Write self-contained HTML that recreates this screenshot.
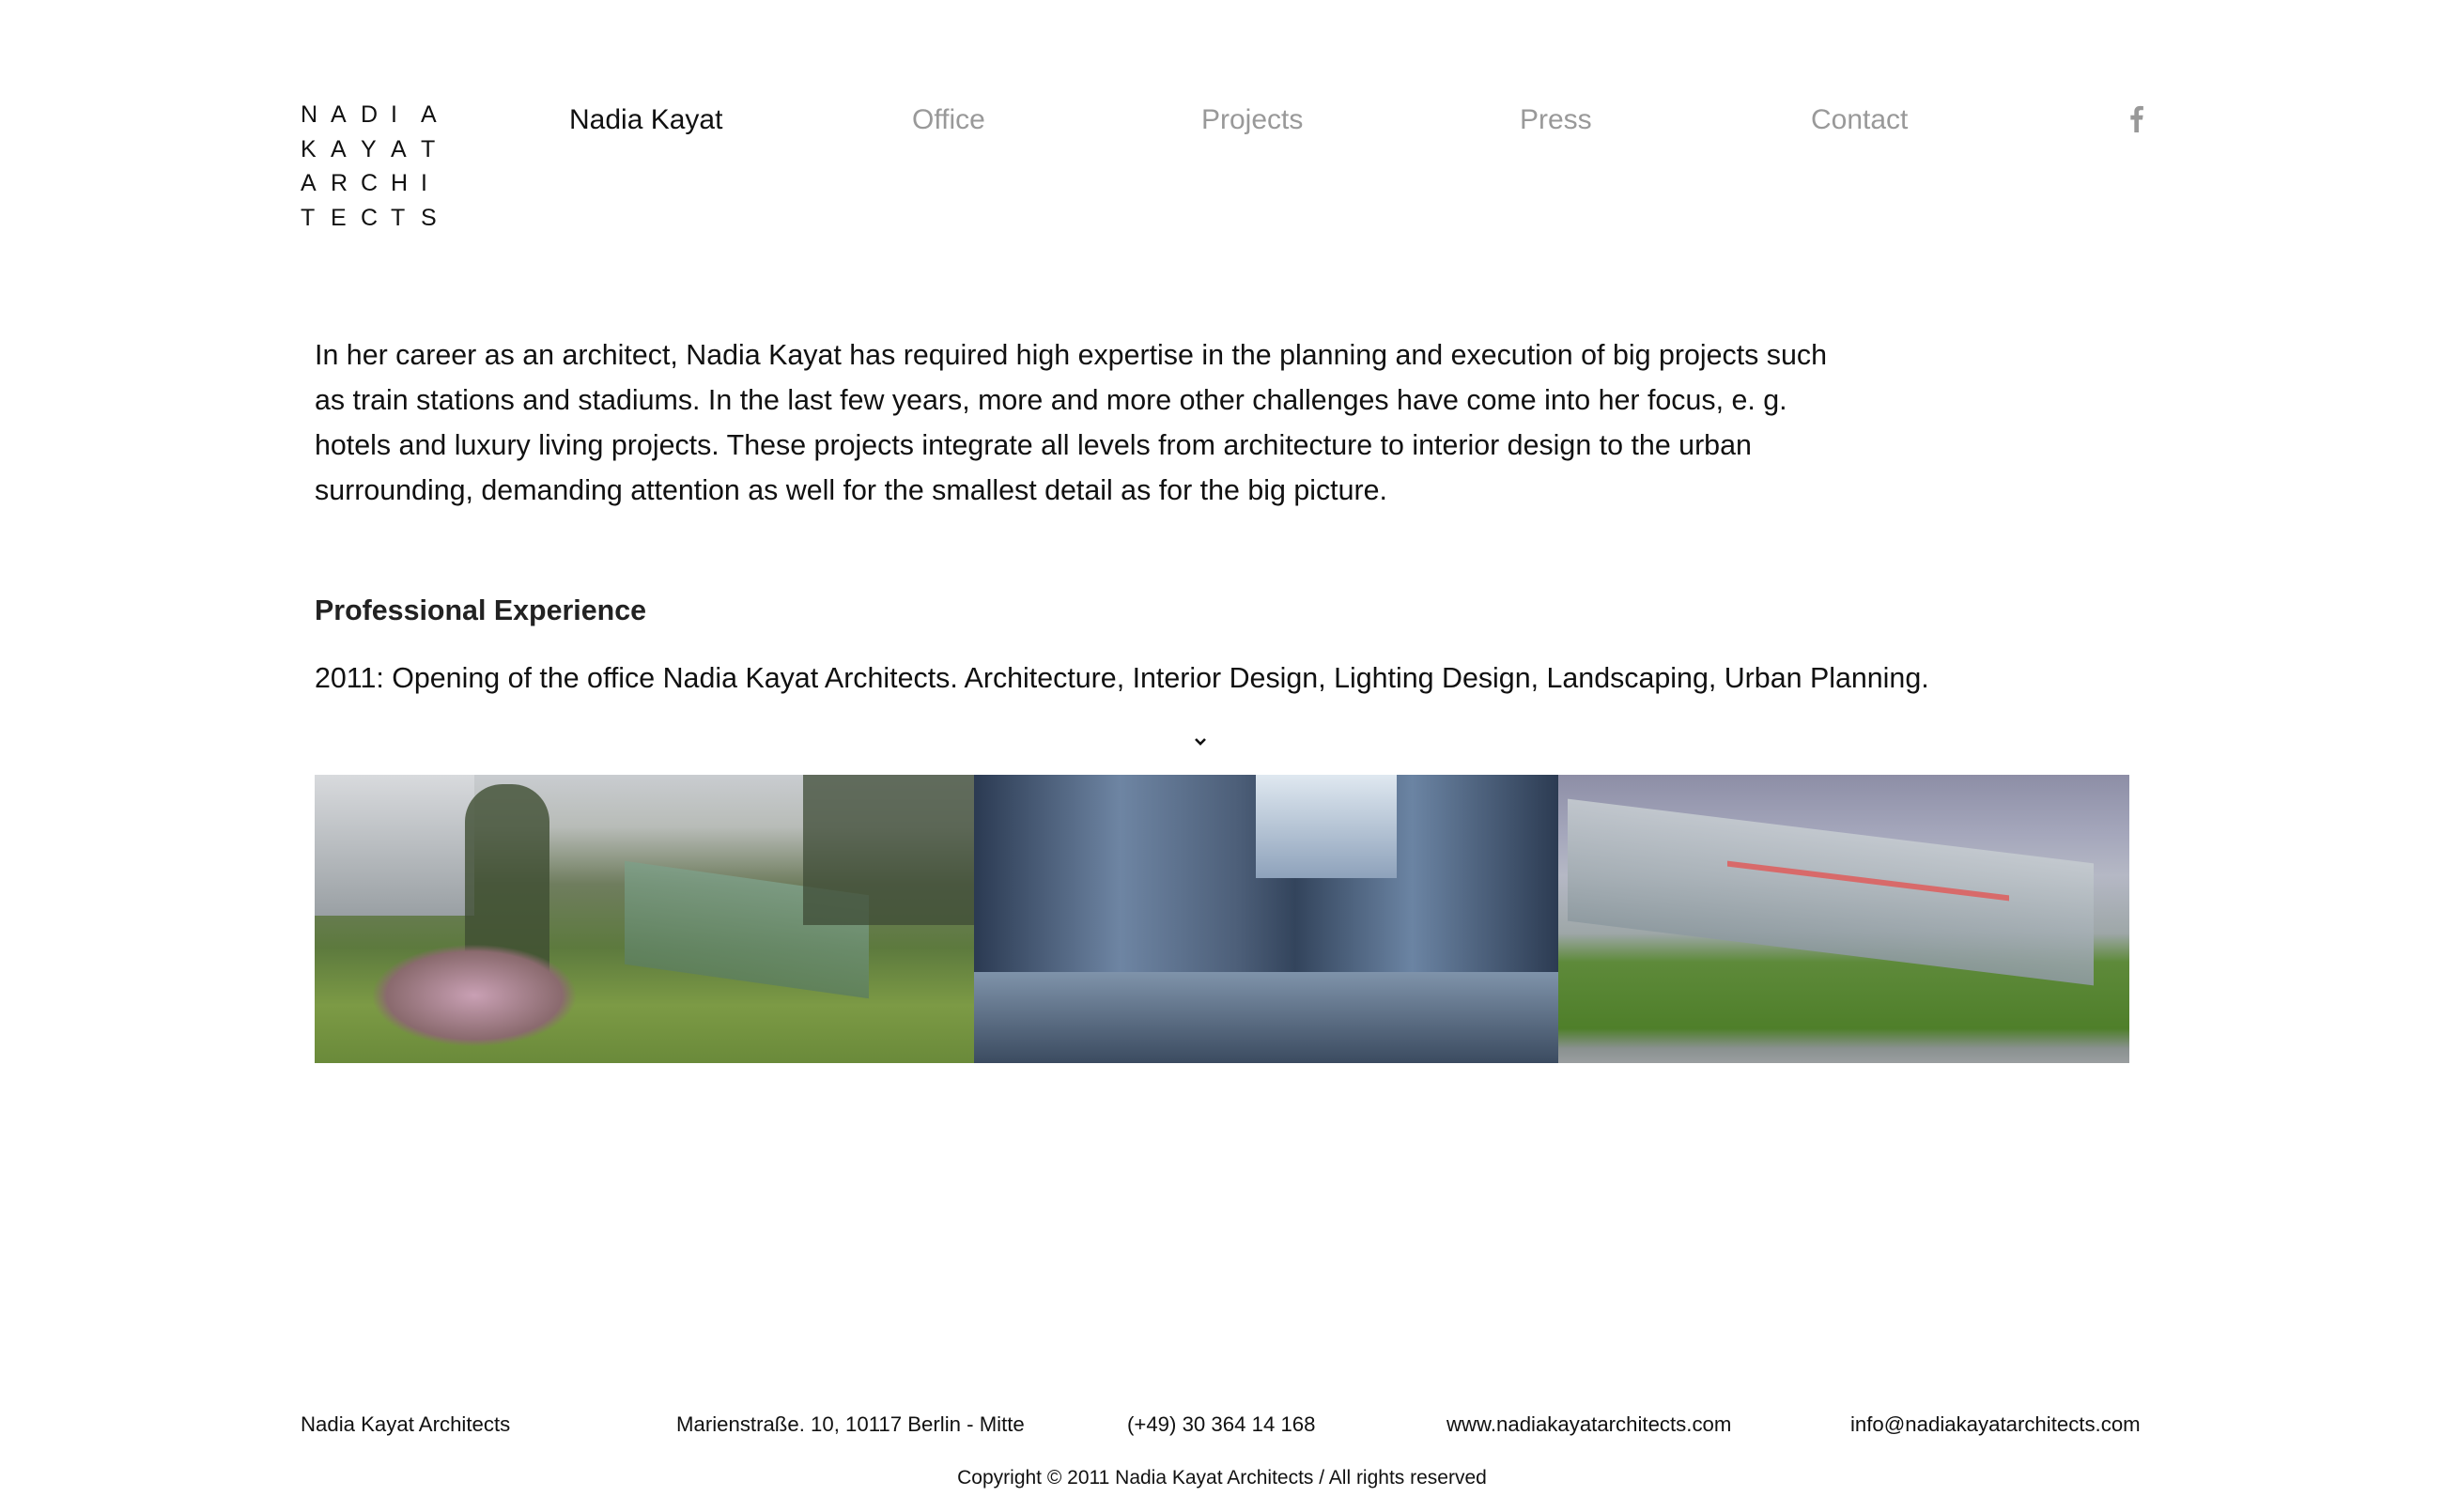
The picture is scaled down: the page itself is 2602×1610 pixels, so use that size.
<!DOCTYPE html>
<html><head><meta charset="utf-8"><style>
html,body{margin:0;padding:0;background:#fff;}
body{width:2602px;height:1610px;position:relative;overflow:hidden;font-family:"Liberation Sans",Arial,sans-serif;color:#111;}
.a{position:absolute;white-space:nowrap;}
.logo{left:320px;top:104px;font-size:25px;line-height:36.5px;}
.logo div{white-space:nowrap;height:36.5px;}
.logo span{width:32px;display:inline-block;text-align:left;}
.nav{top:111px;font-size:30px;color:#999;}
.p{left:335px;font-size:30.4px;line-height:48px;color:#111;}
.f{top:1504px;font-size:22.2px;color:#111;}
</style></head><body>
<div class="a logo">
<div><span>N</span><span>A</span><span>D</span><span>I</span><span>A</span></div>
<div><span>K</span><span>A</span><span>Y</span><span>A</span><span>T</span></div>
<div><span>A</span><span>R</span><span>C</span><span>H</span><span>I</span></div>
<div><span>T</span><span>E</span><span>C</span><span>T</span><span>S</span></div>
</div>
<div class="a nav" style="left:606px;color:#111">Nadia Kayat</div>
<div class="a nav" style="left:971px">Office</div>
<div class="a nav" style="left:1279px">Projects</div>
<div class="a nav" style="left:1618px">Press</div>
<div class="a nav" style="left:1928px">Contact</div>
<svg class="a" style="left:2266px;top:111px" width="17" height="30" viewBox="0 0 16 30"><path d="M10.5 30V16.5h4l.6-4.8h-4.6V8.6c0-1.4.4-2.3 2.4-2.3H15.4V2.1C15 2 13.5 1.9 11.8 1.9 8.2 1.9 5.8 4.1 5.8 8.1v3.6H1.8v4.8h4V30z" fill="#999"/></svg>

<div class="a p" style="top:354px">In her career as an architect, Nadia Kayat has required high expertise in the planning and execution of big projects such<br>as train stations and stadiums. In the last few years, more and more other challenges have come into her focus, e. g.<br>hotels and luxury living projects. These projects integrate all levels from architecture to interior design to the urban<br>surrounding, demanding attention as well for the smallest detail as for the big picture.</div>
<div class="a p" style="top:626px;font-weight:bold;color:#222">Professional Experience</div>
<div class="a p" style="top:698px">2011: Opening of the office Nadia Kayat Architects. Architecture, Interior Design, Lighting Design, Landscaping, Urban Planning.</div>
<svg class="a" style="left:1271px;top:785px" width="14" height="10" viewBox="0 0 14 10"><path d="M2 2l5 5 5-5" stroke="#111" stroke-width="2.6" fill="none"/></svg>

<div class="a" style="left:335px;top:825px;width:702px;height:307px;overflow:hidden;background:linear-gradient(180deg,#c9ccd0 0%,#b8bcb8 18%,#6f7d5e 38%,#5d7a3e 60%,#7c9a45 80%,#6a8a3a 100%)">
 <div style="position:absolute;left:0;top:0;width:170px;height:150px;background:linear-gradient(180deg,#d8dadd,#9aa0a4)"></div>
 <div style="position:absolute;left:160px;top:10px;width:90px;height:200px;background:#3f4d32;border-radius:40px 40px 0 0;opacity:.8"></div>
 <div style="position:absolute;left:330px;top:110px;width:260px;height:110px;background:linear-gradient(180deg,#7e9f88,#5d7f5e);opacity:.85;transform:skewY(8deg)"></div>
 <div style="position:absolute;left:520px;top:0;width:186px;height:160px;background:#3e4b36;opacity:.75"></div>
 <div style="position:absolute;left:60px;top:180px;width:220px;height:110px;background:radial-gradient(#c9a0b4,#8a6a6e 60%,transparent 70%)"></div>
</div>
<div class="a" style="left:1037px;top:825px;width:622px;height:307px;overflow:hidden;background:linear-gradient(90deg,#2b3a52 0%,#6e85a3 25%,#4d5f79 45%,#33445c 55%,#6b84a3 75%,#2c3b52 100%)">
 <div style="position:absolute;left:300px;top:0;width:150px;height:110px;background:linear-gradient(180deg,#dfe8f0,#8ea2bb)"></div>
 <div style="position:absolute;left:0;top:210px;width:622px;height:97px;background:linear-gradient(180deg,#7f93aa,#3b4b60)"></div>
</div>
<div class="a" style="left:1659px;top:825px;width:608px;height:307px;overflow:hidden;background:linear-gradient(180deg,#8d8ea6 0%,#a4a6bb 20%,#b5b8c5 35%,#9ea7a8 55%,#5e8a3a 65%,#4f7f2a 88%,#8a9190 95%,#9a9ea0 100%)">
 <div style="position:absolute;left:10px;top:60px;width:560px;height:130px;background:linear-gradient(180deg,#c5cbd0,#8e9aa0);transform:skewY(7deg);opacity:.9"></div>
 <div style="position:absolute;left:180px;top:110px;width:300px;height:6px;background:#d86a6a;transform:skewY(7deg)"></div>
</div>

<div class="a f" style="left:320px">Nadia Kayat Architects</div>
<div class="a f" style="left:720px">Marienstraße. 10, 10117 Berlin - Mitte</div>
<div class="a f" style="left:1200px">(+49) 30 364 14 168</div>
<div class="a f" style="left:1540px">www.nadiakayatarchitects.com</div>
<div class="a f" style="left:1970px">info@nadiakayatarchitects.com</div>
<div class="a" style="left:0;width:2602px;text-align:center;top:1562px;font-size:21px">Copyright © 2011 Nadia Kayat Architects / All rights reserved</div>
</body></html>
